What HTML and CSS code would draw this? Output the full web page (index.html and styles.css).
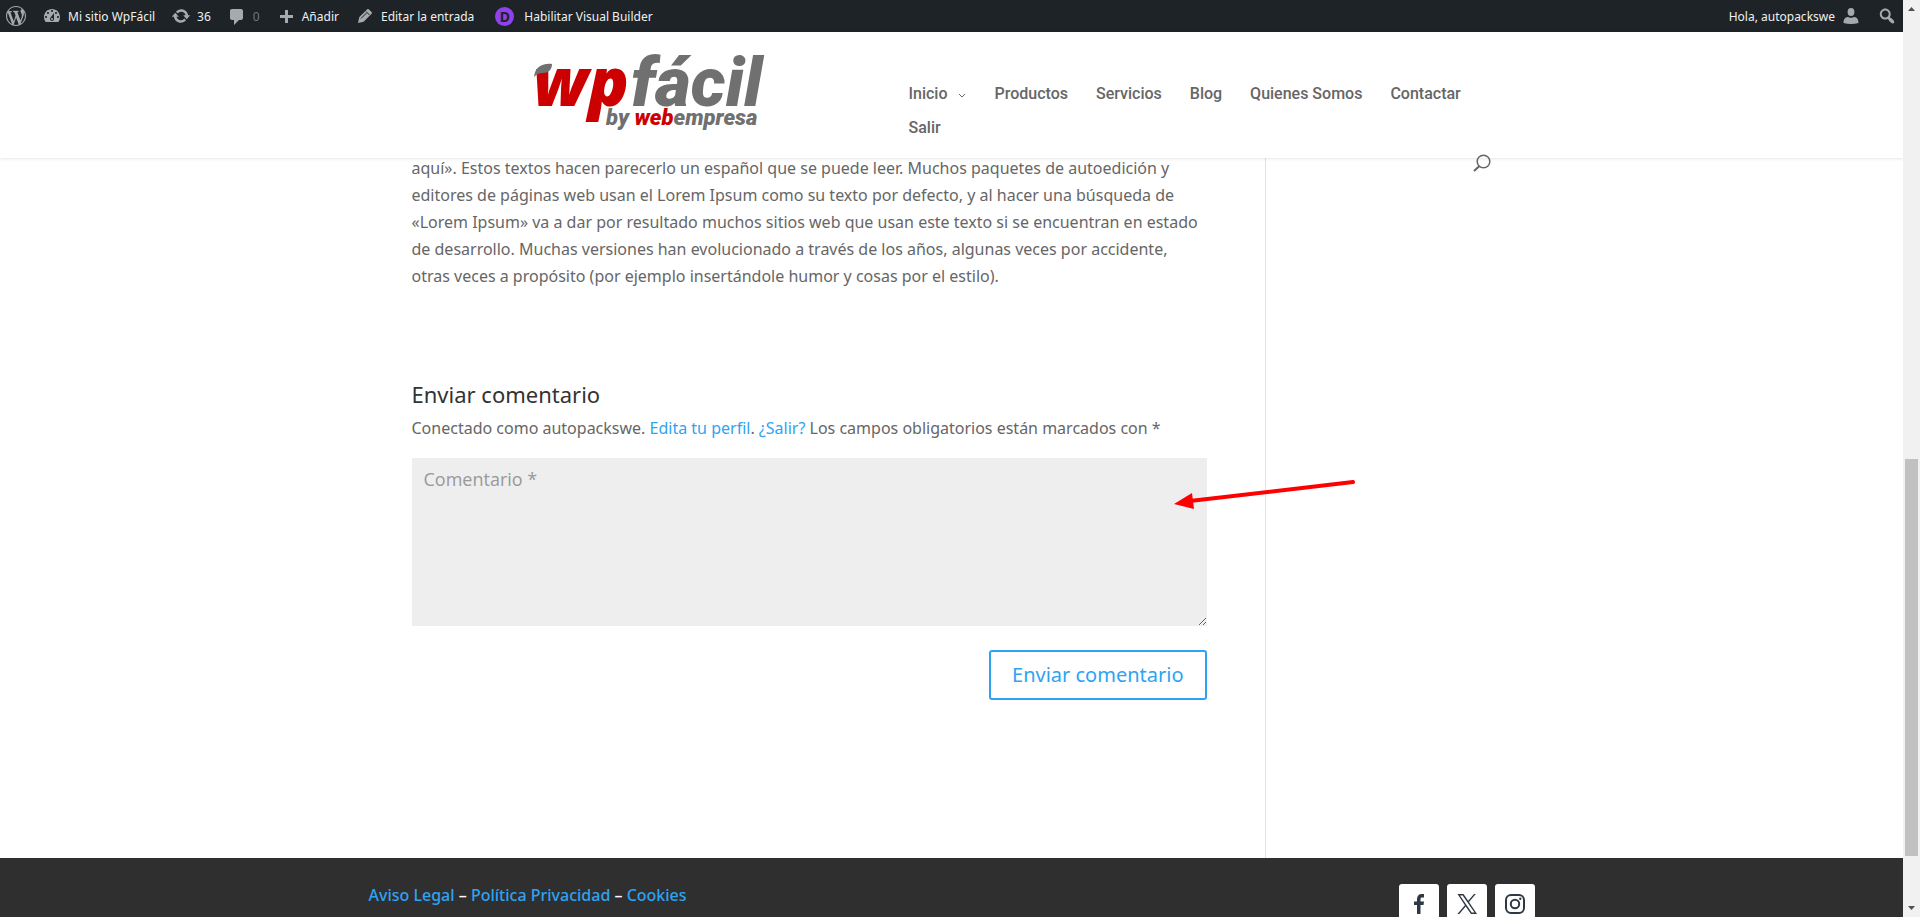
FILE: index.html
```
<!DOCTYPE html>
<html lang="es">
<head>
    <meta charset="UTF-8">
    <meta name="viewport" content="width=device-width, initial-scale=1.0">
    <title>WpFácil</title>
    <link rel="stylesheet" href="styles.css">
</head>
<body>
    <div class="site">
        <div class="top">
            <!-- Admin bar -->
            <nav class="adminbar" aria-label="Barra de herramientas">
                <a href="#" aria-label="Acerca de WordPress">
                    <svg viewBox="0 0 20 20"><path d="M20 10c0-5.51-4.49-10-10-10C4.48 0 0 4.49 0 10c0 5.52 4.48 10 10 10 5.51 0 10-4.48 10-10zM7.78 15.37L4.37 6.22c.55-.02 1.17-.08 1.17-.08.5-.06.44-1.13-.06-1.11 0 0-1.45.11-2.37.11-.18 0-.37 0-.58-.01C4.12 2.69 6.87 1.11 10 1.11c2.33 0 4.45.87 6.05 2.34-.68-.11-1.65.39-1.65 1.58 0 .74.45 1.36.9 2.1.35.61.55 1.36.55 2.46 0 1.49-1.4 5-1.4 5l-3.03-8.37c.54-.02.82-.17.82-.17.5-.05.44-1.25-.06-1.22 0 0-1.44.12-2.38.12-.87 0-2.33-.12-2.33-.12-.5-.03-.56 1.2-.06 1.22l.92.08 1.26 3.41zM17.41 10c.24-.64.74-1.87.43-4.25.7 1.29 1.05 2.71 1.05 4.25 0 3.29-1.73 6.24-4.4 7.78.97-2.59 1.94-5.2 2.92-7.78zM6.1 18.09C3.12 16.65 1.11 13.53 1.11 10c0-1.3.23-2.48.72-3.59C3.25 10.3 4.67 14.2 6.1 18.09zm4.03-6.63l2.58 6.98c-.86.29-1.76.45-2.71.45-.79 0-1.57-.11-2.29-.33.81-2.38 1.62-4.74 2.42-7.1z"/></svg>
                </a>
                <a href="#">
                    <svg viewBox="0 0 20 20"><path fill-rule="evenodd" d="M3.76 16h12.48c1.1-1.37 1.76-3.11 1.76-5 0-4.42-3.58-8-8-8s-8 3.58-8 8c0 1.89.66 3.63 1.76 5zM10 4c.55 0 1 .45 1 1s-.45 1-1 1-1-.45-1-1 .45-1 1-1zM6 6c.55 0 1 .45 1 1s-.45 1-1 1-1-.45-1-1 .45-1 1-1zm8 0c.55 0 1 .45 1 1s-.45 1-1 1-1-.45-1-1 .45-1 1-1zm-5.37 5.55L12 7v6c0 1.1-.9 2-2 2s-2-.9-2-2c0-.57.24-1.08.63-1.45zM4 10c.55 0 1 .45 1 1s-.45 1-1 1-1-.45-1-1 .45-1 1-1zm12 0c.55 0 1 .45 1 1s-.45 1-1 1-1-.45-1-1 .45-1 1-1zm-5 3c0-.55-.45-1-1-1s-1 .45-1 1 .45 1 1 1 1-.45 1-1z"/></svg>
                    <span>Mi sitio WpFácil</span>
                </a>
                <a href="#">
                    <svg viewBox="0 0 20 20"><path d="M10.2 3.28c3.53 0 6.43 2.61 6.92 6h2.08l-3.5 4-3.5-4h2.32c-.45-1.97-2.21-3.45-4.32-3.45-1.45 0-2.73.71-3.54 1.78L4.95 5.66C6.23 4.2 8.11 3.28 10.2 3.28zm-.4 13.44c-3.52 0-6.43-2.61-6.92-6H.8l3.5-4c1.17 1.33 2.33 2.67 3.5 4H5.48c.45 1.97 2.21 3.45 4.32 3.45 1.45 0 2.73-.71 3.54-1.78l1.71 1.95c-1.28 1.46-3.15 2.38-5.25 2.38z"/></svg>
                    <span>36</span>
                </a>
                <a href="#">
                    <svg viewBox="0 0 20 20"><path d="M5 3h9c1.1 0 2 .9 2 2v7c0 1.1-.9 2-2 2h-2l-5 5v-5H5c-1.1 0-2-.9-2-2V5c0-1.1.9-2 2-2z"/></svg>
                    <span class="zero">0</span>
                </a>
                <a href="#">
                    <svg viewBox="0 0 20 20"><path d="M17 9v3h-5v5H9v-5H4V9h5V4h3v5h5z"/></svg>
                    <span>Añadir</span>
                </a>
                <a href="#">
                    <svg viewBox="0 0 20 20"><path d="M13.89 3.39l2.71 2.72c.46.46.42 1.24.03 1.64l-8.01 8.02-5.56 1.16 1.16-5.58s7.600-7.630 7.990-8.030c.39-.39 1.220-.39 1.680.07z"/><path d="M11 5.500l3.500 3.500M6 12.500l5.500-5.500" stroke="#1d2327" fill="none"/></svg>
                    <span>Editar la entrada</span>
                </a>
                <a class="builder" href="#">
                    <span class="divi">D</span>
                    <span>Habilitar Visual Builder</span>
                </a>
                <a class="account" href="#">
                    <span>Hola, autopackswe</span>
                    <svg viewBox="0 0 20 20"><ellipse cx="10" cy="6" rx="3.4" ry="4"/><path d="M2.500 17c0-4 2-6 4.500-6 1 1 5 1 6 0 2.500 0 4.500 2 4.500 6q-7.500 2-15 0z"/></svg>
                </a>
                <a href="#" aria-label="Buscar">
                    <svg viewBox="0 0 20 20"><path fill-rule="evenodd" d="M12.14 4.18c1.87 1.87 2.11 4.75.72 6.89.12.1.22.21.36.31.2.16.47.36.81.59.34.24.56.39.66.47.42.31.73.57.94.78.32.32.6.65.84 1 .25.35.44.69.59 1.04.14.35.21.68.18 1-.02.32-.14.59-.36.81s-.49.34-.81.36c-.31.02-.65-.04-.99-.19-.35-.14-.7-.34-1.04-.59-.35-.24-.68-.52-1-.84-.21-.21-.47-.52-.77-.93-.1-.13-.25-.35-.47-.66-.22-.32-.4-.57-.56-.78-.16-.2-.29-.35-.44-.5-2.07 1.09-4.69.76-6.44-.98-2.14-2.15-2.14-5.64 0-7.78 2.15-2.15 5.63-2.15 7.78 0zm-1.41 6.36c1.36-1.37 1.36-3.58 0-4.95-1.37-1.37-3.59-1.37-4.95 0-1.37 1.37-1.37 3.58 0 4.95 1.36 1.37 3.58 1.37 4.95 0z"/></svg>
                </a>
            </nav>

            <header class="header">
                <div class="container header-inner">
                    <a class="logo" href="#" aria-label="WpFácil">
                        <svg viewBox="0 0 240 96">
                            <text class="logo-name" y="67"><tspan class="logo-wp red" x="0">wp</tspan><tspan x="98">fácil</tspan></text>
                            <text class="logo-by" x="73" y="86">by <tspan class="red">web</tspan>empresa</text>
                            <path fill="#707070" d="M1 38C2 29 8 24 19 25c0 6-4 9-9 9-4 0-6 1-9 4z"/>
                        </svg>
                    </a>
                    <nav class="menu">
                        <a href="#">Inicio <svg class="caret" viewBox="0 0 8 6"><path d="M1 1l3 3 3-3"/></svg></a>
                        <a href="#">Productos</a>
                        <a href="#">Servicios</a>
                        <a href="#">Blog</a>
                        <a href="#">Quienes Somos</a>
                        <a href="#">Contactar</a>
                        <a href="#">Salir</a>
                    </nav>
                    <button class="search" aria-label="Buscar">
                        <svg viewBox="0 0 18 18"><circle cx="10.500" cy="7.500" r="6.300" stroke-width="1.500"/><path d="M6.500 12L1 17" stroke-width="2"/></svg>
                    </button>
                </div>
            </header>
        </div>

        <main class="container">
            <div class="content">
                <p>aquí». Estos textos hacen parecerlo un español que se puede leer. Muchos paquetes de autoedición y editores de páginas web usan el Lorem Ipsum como su texto por defecto, y al hacer una búsqueda de «Lorem Ipsum» va a dar por resultado muchos sitios web que usan este texto si se encuentran en estado de desarrollo. Muchas versiones han evolucionado a través de los años, algunas veces por accidente, otras veces a propósito (por ejemplo insertándole humor y cosas por el estilo).</p>

                <form class="comment-form">
                    <h3>Enviar comentario</h3>
                    <p>Conectado como autopackswe. <a href="#">Edita tu perfil</a>. <a href="#">¿Salir?</a> Los campos obligatorios están marcados con *</p>
                    <div class="field">
                        <textarea aria-label="Comentario" placeholder="Comentario *"></textarea>
                        <svg class="arrow" viewBox="0 0 184 32"><path d="M16 21L179 2" stroke="#f00" stroke-width="4" stroke-linecap="round"/><path d="M0 24l18-11 2 16z" fill="#f00"/></svg>
                    </div>
                    <button class="submit" type="button">Enviar comentario</button>
                </form>
            </div>
        </main>

        <footer class="footer">
            <div class="footer-inner">
                <p><a href="#">Aviso Legal</a> – <a href="#">Política Privacidad</a> – <a href="#">Cookies</a></p>
                <div class="social">
                    <a href="#" aria-label="Facebook"><svg viewBox="0 0 20 20"><path d="M8 20v-9H5V7.500h3V5c0-3 1.800-5 4.500-5H15v3.500h-1.700c-1.300 0-1.800.5-1.800 1.700v2.300H15L14.500 11h-3v9z"/></svg></a>
                    <a href="#" aria-label="X"><svg viewBox="0 0 20 20"><path fill-rule="evenodd" d="M.5 0h6l4.700 6.700L17 0h1.800l-6.800 7.900L20 20h-6l-5.300-7.500L2.300 20H.4l7.500-8.800zM3 1.400l11.700 17.200h2.800L5.700 1.400z"/></svg></a>
                    <a href="#" aria-label="Instagram"><svg viewBox="0 0 20 20"><g fill="none" stroke="#2f3847" stroke-width="2"><rect x="1" y="1" width="18" height="18" rx="5"/><circle cx="10" cy="10" r="4.200"/></g><circle cx="15.300" cy="4.700" r="1.200"/></svg></a>
                </div>
            </div>
        </footer>
    </div>

    <div class="scrollbar" aria-hidden="true">
        <svg viewBox="0 0 7 4"><path d="M0 4l3.500-4L7 4z"/></svg>
        <div class="track"><div class="thumb"></div></div>
        <svg viewBox="0 0 7 4"><path d="M0 0l3.500 4L7 0z"/></svg>
    </div>
</body>
</html>
```
FILE: styles.css
```
* {
    box-sizing: border-box;
}
body {
    margin: 0;
    display: flex;
    height: 100vh;
    overflow: hidden;
    background: #fff;
    color: #666;
    font-family: "Noto Sans", sans-serif;
    font-size: 16px;
    font-weight: 400;
    line-height: 27px;
}
a {
    color: #2ea3f2;
    text-decoration: none;
}
p, h3 {
    margin: 0;
}
.site {
    flex: 1;
    min-width: 0;
    overflow: hidden;
}
.container {
    width: 80%;
    max-width: 1080px;
    margin: 0 auto;
}
.top {
    position: relative;
    z-index: 2;
}

/* Admin bar */
.adminbar {
    display: flex;
    gap: 16px;
    height: 32px;
    padding: 0 6px;
    background: #1d2327;
    font-size: 12px;
}
.adminbar a {
    display: flex;
    align-items: center;
    gap: 6px;
    color: #f0f0f1;
    white-space: nowrap;
}
.adminbar svg {
    width: 20px;
    height: 20px;
    fill: #a7aaad;
}
.adminbar .zero {
    color: #72777c;
}
.adminbar .builder {
    gap: 10px;
    margin-left: 5px;
}
.divi {
    width: 19px;
    height: 19px;
    border-radius: 50%;
    background: #8f42ec;
    color: #1d2327;
    font-size: 14px;
    font-weight: 700;
    line-height: 19px;
    text-align: center;
}
.adminbar .account {
    margin-left: auto;
}

/* Header */
.header {
    background: #fff;
    box-shadow: 0 1px 3px rgba(0, 0, 0, 0.1);
}
.header-inner {
    position: relative;
    display: flex;
    height: 126px;
}
.logo {
    width: 240px;
    margin: 7px 136px 0 121px;
}
.logo svg {
    display: block;
    width: 240px;
    height: 96px;
    overflow: visible;
}
.logo text {
    fill: #707070;
    font-family: Roboto, sans-serif;
    font-style: italic;
    font-weight: 900;
}
.logo .red {
    fill: #c00;
}
.logo-name {
    font-size: 69px;
}
.logo-wp {
    font-family: "Open Sans", sans-serif;
    font-size: 67px;
    font-weight: 800;
}
.logo-by {
    font-size: 22px;
}
.menu {
    flex: 1;
    display: flex;
    flex-wrap: wrap;
    align-content: flex-start;
    column-gap: 28px;
    padding-top: 45px;
    font-family: Roboto, sans-serif;
    font-weight: 500;
    line-height: 34px;
}
.menu a {
    color: #666;
}
.caret {
    width: 8px;
    height: 6px;
    margin: 0 1px 0 6px;
    fill: none;
    stroke: #666;
    stroke-width: 1;
}
.search {
    position: absolute;
    right: 1px;
    bottom: -14px;
    padding: 0;
    border: 0;
    background: none;
}
.search svg {
    display: block;
    width: 18px;
    height: 18px;
    fill: none;
    stroke: #666;
}

/* Post */
.content {
    width: calc(100% - 226px);
    margin-top: -3px;
    padding-right: 58px;
    padding-bottom: 158px;
    border-right: 1px solid #e2e2e2;
}
.comment-form {
    display: flex;
    flex-direction: column;
    padding-top: 88px;
}
.comment-form h3 {
    margin-bottom: 5px;
    color: #333;
    font-size: 22px;
    font-weight: 400;
    line-height: 32px;
}
.field {
    position: relative;
    margin: 16px 0 24px;
}
.field textarea {
    display: block;
    width: 100%;
    height: 168px;
    padding: 9px 12px;
    border: 0;
    background: #eee;
    font: 400 18px/24px "Open Sans", sans-serif;
}
.field textarea::placeholder {
    color: #999;
}
.arrow {
    position: absolute;
    top: 22px;
    left: calc(100% - 33px);
    width: 184px;
    height: 32px;
    fill: none;
}
.submit {
    align-self: flex-end;
    height: 50px;
    padding: 0 21px;
    border: 2px solid #2ea3f2;
    border-radius: 3px;
    background: none;
    color: #2ea3f2;
    font: 400 20px/34px "Noto Sans", sans-serif;
}

/* Footer */
.footer {
    background: #2f2f2f;
}
.footer-inner {
    display: flex;
    justify-content: space-between;
    width: 1166px;
    max-width: 90%;
    margin: 0 auto;
    padding: 24px 0 32px;
    color: #fff;
    font-weight: 500;
}
.social {
    display: flex;
    gap: 8px;
    padding-top: 2px;
}
.social a {
    display: flex;
    align-items: center;
    justify-content: center;
    width: 40px;
    height: 40px;
    border-radius: 3px;
    background: #fff;
}
.social svg {
    width: 20px;
    height: 20px;
    fill: #2f3847;
}

/* Scrollbar */
.scrollbar {
    display: flex;
    flex-direction: column;
    align-items: center;
    width: 17px;
    padding: 7px 2px;
    background: #f1f1f1;
}
.scrollbar svg {
    width: 7px;
    height: 4px;
    fill: #505050;
}
.track {
    flex: 1;
    display: flex;
    flex-direction: column;
    justify-content: flex-end;
    width: 100%;
    padding-bottom: 50px;
}
.thumb {
    height: 47%;
    background: #c1c1c1;
}
```
